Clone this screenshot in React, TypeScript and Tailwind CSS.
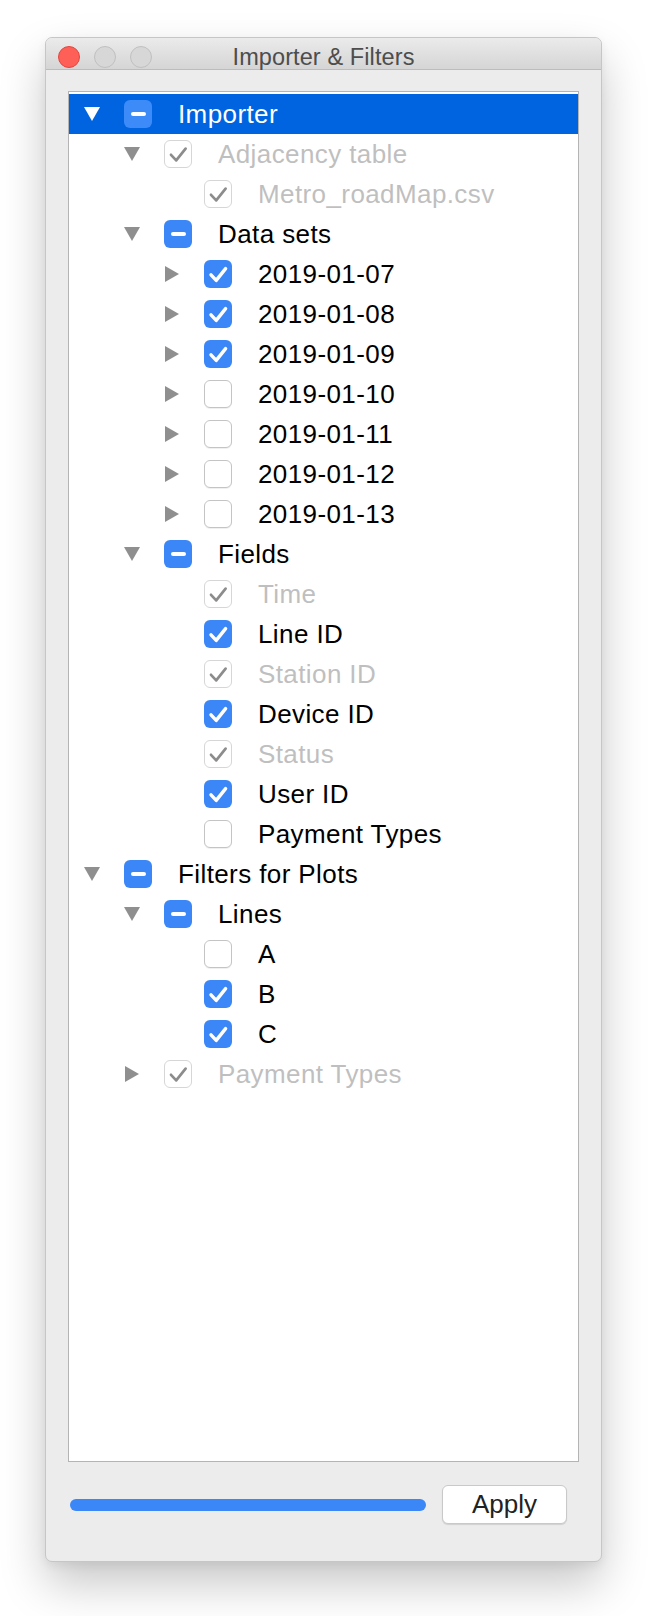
import React from "react";

type Check = "minus" | "checked" | "unchecked" | "disabled";
type Row = {
  level: number;
  arrow?: "down" | "right";
  check: Check;
  label: string;
  dim?: boolean;
  selected?: boolean;
};

const ROWS: Row[] = [
  { level: 0, arrow: "down", check: "minus", label: "Importer", selected: true },
  { level: 1, arrow: "down", check: "disabled", label: "Adjacency table", dim: true },
  { level: 2, check: "disabled", label: "Metro_roadMap.csv", dim: true },
  { level: 1, arrow: "down", check: "minus", label: "Data sets" },
  { level: 2, arrow: "right", check: "checked", label: "2019-01-07" },
  { level: 2, arrow: "right", check: "checked", label: "2019-01-08" },
  { level: 2, arrow: "right", check: "checked", label: "2019-01-09" },
  { level: 2, arrow: "right", check: "unchecked", label: "2019-01-10" },
  { level: 2, arrow: "right", check: "unchecked", label: "2019-01-11" },
  { level: 2, arrow: "right", check: "unchecked", label: "2019-01-12" },
  { level: 2, arrow: "right", check: "unchecked", label: "2019-01-13" },
  { level: 1, arrow: "down", check: "minus", label: "Fields" },
  { level: 2, check: "disabled", label: "Time", dim: true },
  { level: 2, check: "checked", label: "Line ID" },
  { level: 2, check: "disabled", label: "Station ID", dim: true },
  { level: 2, check: "checked", label: "Device ID" },
  { level: 2, check: "disabled", label: "Status", dim: true },
  { level: 2, check: "checked", label: "User ID" },
  { level: 2, check: "unchecked", label: "Payment Types" },
  { level: 0, arrow: "down", check: "minus", label: "Filters for Plots" },
  { level: 1, arrow: "down", check: "minus", label: "Lines" },
  { level: 2, check: "unchecked", label: "A" },
  { level: 2, check: "checked", label: "B" },
  { level: 2, check: "checked", label: "C" },
  { level: 1, arrow: "right", check: "disabled", label: "Payment Types", dim: true },
];

function Arrow({ dir, white }: { dir?: "down" | "right"; white?: boolean }) {
  if (!dir) return null;
  const fill = white ? "#ffffff" : "#8f8f8f";
  if (dir === "down") {
    return (
      <svg width="16" height="14" viewBox="0 0 16 14">
        <path d="M0 0 H16 L8 14 Z" fill={fill} />
      </svg>
    );
  }
  return (
    <svg width="14" height="16" viewBox="0 0 14 16">
      <path d="M0 0 L14 8 L0 16 Z" fill={fill} />
    </svg>
  );
}

function Box({ state, onBlue }: { state: Check; onBlue?: boolean }) {
  if (state === "minus") {
    return (
      <div
        className={`w-[28px] h-[28px] rounded-[6px] flex items-center justify-center ${
          onBlue ? "bg-[#3d8bf8]" : "bg-[#3b87f7]"
        }`}
      >
        <div className="w-[15px] h-[4px] rounded-full bg-white" />
      </div>
    );
  }
  if (state === "checked") {
    return (
      <div className="w-[28px] h-[28px] rounded-[6px] bg-[#3b87f7] flex items-center justify-center">
        <svg width="28" height="28" viewBox="0 0 28 28">
          <path d="M7 14.8 L12.2 20.4 L21.6 8.6" fill="none" stroke="#fff" strokeWidth="3.4" strokeLinecap="round" strokeLinejoin="round" />
        </svg>
      </div>
    );
  }
  if (state === "disabled") {
    return (
      <div className="w-[28px] h-[28px] rounded-[6px] bg-white border border-[#d6d6d6] flex items-center justify-center">
        <svg width="26" height="26" viewBox="0 0 26 26">
          <path d="M6 13.8 L11.2 19.4 L20.6 7.6" fill="none" stroke="#8c8c8c" strokeWidth="2.7" strokeLinecap="round" strokeLinejoin="round" />
        </svg>
      </div>
    );
  }
  return <div className="w-[28px] h-[28px] rounded-[6px] bg-white border border-[#c4c4c4] shadow-[0_1px_0_rgba(0,0,0,0.06)]" />;
}

function TreeRow({ row }: { row: Row }) {
  return (
    <div
      className={`h-[40px] flex items-center ${row.selected ? "bg-[#0064e1]" : ""}`}
      style={{ paddingLeft: row.level * 40 }}
    >
      <div className="w-[46px] h-[40px] flex items-center justify-center">
        <Arrow dir={row.arrow} white={row.selected} />
      </div>
      <div className="ml-[9px]">
        <Box state={row.check} onBlue={row.selected} />
      </div>
      <span
        className={`ml-[26px] text-[26px] leading-[40px] tracking-[0.4px] whitespace-nowrap ${
          row.selected ? "text-white" : row.dim ? "text-[#bfbfbf]" : "text-black"
        }`}
      >
        {row.label}
      </span>
    </div>
  );
}

export default function App() {
  return (
    <div className="w-[648px] h-[1616px] bg-white pt-[37px] pl-[45px]" style={{ fontFamily: '"Liberation Sans", Arial, sans-serif' }}>
      <div className="w-[557px] h-[1525px] flex flex-col bg-[#ececec] border border-[#c6c6c6] rounded-[7px] overflow-hidden shadow-[0_22px_46px_rgba(0,0,0,0.22),0_4px_10px_rgba(0,0,0,0.06)]">
        {/* title bar */}
        <div className="h-[32px] shrink-0 grid grid-cols-[1fr_auto_1fr] items-center bg-gradient-to-b from-[#ebebeb] to-[#d5d5d5] border-b border-[#bcbcbc]">
          <div className="flex items-center gap-[14px] pl-[12px]">
            <div className="w-[22px] h-[22px] rounded-full bg-[#fe5f57] border border-[#e2463f]" />
            <div className="w-[22px] h-[22px] rounded-full bg-[#d7d7d7] border border-[#c0c0c0]" />
            <div className="w-[22px] h-[22px] rounded-full bg-[#d7d7d7] border border-[#c0c0c0]" />
          </div>
          <div className="text-[23.5px] text-[#4d4d4d] pt-[2px] tracking-[0.1px]">Importer &amp; Filters</div>
          <div />
        </div>

        {/* body */}
        <div className="flex-1 flex flex-col px-[22px] pt-[21px]">
          <div className="h-[1371px] bg-white border border-[#b4b4b4] pt-[2px]">
            {ROWS.map((r, i) => (
              <TreeRow key={i} row={r} />
            ))}
          </div>
          <div className="mt-[23px] flex items-center">
            <div className="ml-[2px] w-[356px] h-[12px] rounded-full bg-[#3b87f7]" />
            <button className="ml-[16px] w-[125px] h-[39px] rounded-[6px] bg-white border border-[#c9c9c9] shadow-[0_1px_1px_rgba(0,0,0,0.12)] text-[26px] text-[#222] flex items-center justify-center">
              Apply
            </button>
          </div>
        </div>
      </div>
    </div>
  );
}
